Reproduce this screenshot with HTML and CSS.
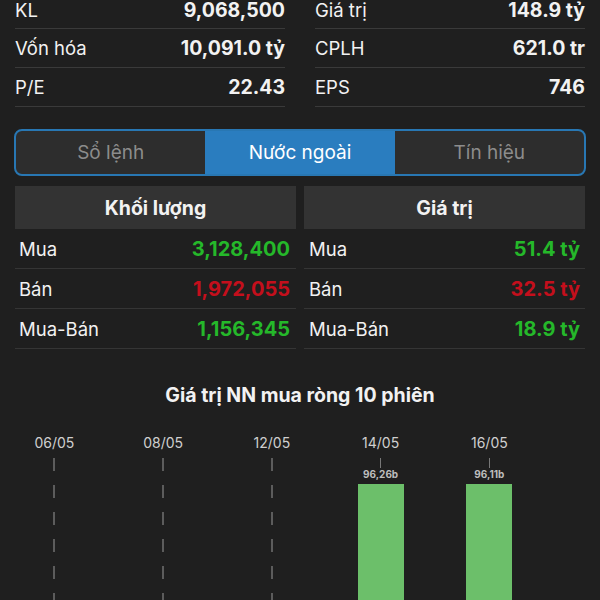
FILE: index.html
```html
<!DOCTYPE html>
<html lang="vi">
<head>
    <meta charset="UTF-8">
    <meta name="viewport" content="width=device-width, initial-scale=1.0">
    <title>Nước ngoài</title>
    <link rel="stylesheet" href="styles.css">
</head>
<body>

<div class="summary">
    <div class="summary-col">
        <div class="summary-row"><span>KL</span><b>9,068,500</b></div>
        <div class="summary-row"><span>Vốn hóa</span><b>10,091.0 tỷ</b></div>
        <div class="summary-row"><span>P/E</span><b>22.43</b></div>
    </div>
    <div class="summary-col">
        <div class="summary-row"><span>Giá trị</span><b>148.9 tỷ</b></div>
        <div class="summary-row"><span>CPLH</span><b>621.0 tr</b></div>
        <div class="summary-row"><span>EPS</span><b>746</b></div>
    </div>
</div>

<div class="tabs">
    <div class="tab">Sổ lệnh</div>
    <div class="tab active">Nước ngoài</div>
    <div class="tab">Tín hiệu</div>
</div>

<div class="foreign">
    <div class="foreign-col">
        <div class="foreign-head">Khối lượng</div>
        <div class="foreign-row"><span>Mua</span><b class="up">3,128,400</b></div>
        <div class="foreign-row"><span>Bán</span><b class="down">1,972,055</b></div>
        <div class="foreign-row"><span>Mua-Bán</span><b class="up">1,156,345</b></div>
    </div>
    <div class="foreign-col right">
        <div class="foreign-head">Giá trị</div>
        <div class="foreign-row"><span>Mua</span><b class="up">51.4 tỷ</b></div>
        <div class="foreign-row"><span>Bán</span><b class="down">32.5 tỷ</b></div>
        <div class="foreign-row"><span>Mua-Bán</span><b class="up">18.9 tỷ</b></div>
    </div>
</div>

<h2 class="chart-title">Giá trị NN mua ròng 10 phiên</h2>

<div class="chart">
    <div class="chart-col">
        <div class="date">06/05</div>
        <div class="dash"></div>
    </div>
    <div class="chart-col">
        <div class="date">08/05</div>
        <div class="dash"></div>
    </div>
    <div class="chart-col">
        <div class="date">12/05</div>
        <div class="dash"></div>
    </div>
    <div class="chart-col">
        <div class="date">14/05</div>
        <div class="tick"></div>
        <div class="bar-value">96,26b</div>
        <div class="bar"></div>
    </div>
    <div class="chart-col">
        <div class="date">16/05</div>
        <div class="tick"></div>
        <div class="bar-value">96,11b</div>
        <div class="bar"></div>
    </div>
</div>

</body>
</html>
```

FILE: styles.css
```css
* {
    box-sizing: border-box;
    margin: 0;
    padding: 0;
}

body {
    font-family: 'Inter', 'Roboto', sans-serif;
    background-color: #1f1f1f;
    color: #f2f2f2;
    width: 600px;
    height: 600px;
    overflow: hidden;
}

/* Thong tin tong quan */
.summary {
    display: grid;
    grid-template-columns: 1fr 1fr;
    gap: 30px;
    padding: 0 15px;
}

.summary-row {
    display: flex;
    justify-content: space-between;
    align-items: center;
    height: 39px;
    border-bottom: 1px solid #3a3a3a;
    font-size: 18.5px;
    line-height: 22px;
}

/* dong dau bi cuon mat mot phan */
.summary-row:first-child {
    height: 29px;
    align-items: flex-start;
    line-height: 20px;
}

.summary-row b {
    font-size: 19.5px;
    font-weight: 700;
}

/* Tab */
.tabs {
    display: grid;
    grid-template-columns: repeat(3, 1fr);
    margin: 22px 14px 0;
    height: 47px;
    border: 2px solid #2877b3;
    border-radius: 8px;
    overflow: hidden;
    background-color: #2d2d2d;
}

.tab {
    display: flex;
    align-items: center;
    justify-content: center;
    font-size: 19px;
    color: #8c8c8c;
}

.tab.active {
    background-color: #2a7dbf;
    color: #fff;
}

/* Nuoc ngoai */
.foreign {
    display: grid;
    grid-template-columns: 281px 281px;
    gap: 8px;
    padding: 0 15px;
    margin-top: 10px;
}

.foreign-head {
    height: 43px;
    background-color: #333;
    display: flex;
    align-items: center;
    justify-content: center;
    font-size: 19.5px;
    font-weight: 700;
}

.foreign-row {
    display: flex;
    justify-content: space-between;
    align-items: center;
    height: 40px;
    padding: 0 6px 0 4px;
    border-bottom: 1px solid #353535;
    font-size: 18.5px;
}

.foreign-row b {
    font-size: 20px;
    font-weight: 700;
}

.foreign-col.right .foreign-row {
    padding: 0 5px;
}

.up {
    color: #25b82a;
}

.down {
    color: #c40f1c;
}

/* Bieu do */
.chart-title {
    text-align: center;
    font-size: 19.5px;
    font-weight: 700;
    margin-top: 34px;
}

.chart {
    display: grid;
    grid-template-columns: repeat(5, 108.75px);
    margin-top: 27px;
}

.chart-col {
    display: flex;
    flex-direction: column;
    align-items: center;
    height: 190px;
}

.date {
    font-size: 14px;
    color: #cfcfcf;
    line-height: 18px;
}

.dash {
    width: 2px;
    margin-top: 6px;
    flex: 1;
    background: repeating-linear-gradient(#5c5c5c 0 13px, transparent 13px 27px);
}

.tick {
    width: 1px;
    height: 10px;
    margin-top: 6px;
    background-color: #777;
}

.bar-value {
    font-size: 10px;
    font-weight: 700;
    color: #bdbdbd;
    line-height: 12px;
}

.bar {
    width: 46px;
    flex: 1;
    margin-top: 4px;
    background-color: #6cbf6a;
}
```
